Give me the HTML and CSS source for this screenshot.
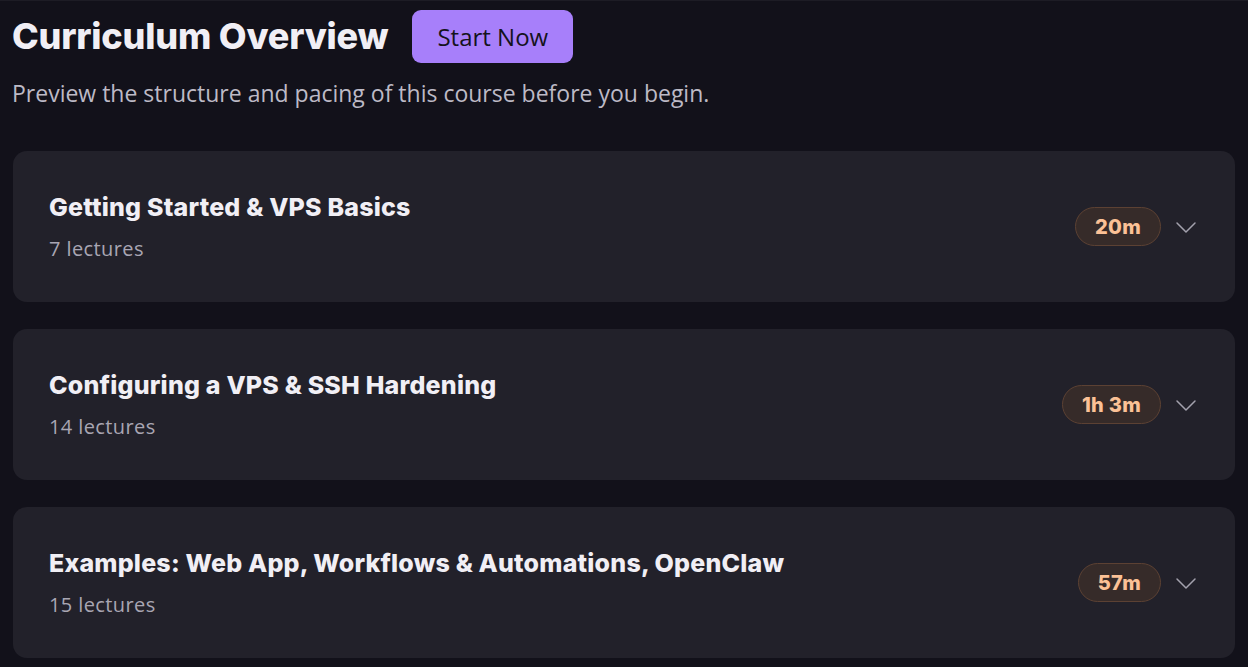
FILE: index.html
```html
<!DOCTYPE html>
<html lang="en">
<head>
<meta charset="utf-8">
<title>Curriculum Overview</title>
<link rel="stylesheet" href="styles.css">
</head>
<body>
<main class="page">
  <header class="head">
    <div class="head-row">
      <h1 class="title">Curriculum Overview</h1>
      <button class="start">Start Now</button>
    </div>
    <p class="lead">Preview the structure and pacing of this course before you begin.</p>
  </header>
  <section class="sections">
    <div class="card">
      <div class="info">
        <h2 class="card-title">Getting Started &amp; VPS Basics</h2>
        <p class="count">7 lectures</p>
      </div>
      <div class="meta">
        <span class="badge">20m</span>
        <svg class="chev" width="24" height="24" viewBox="0 0 24 24" fill="none" stroke="currentColor" stroke-width="1.5" stroke-linecap="round" stroke-linejoin="round"><path d="M3 8l9 9 9-9"/></svg>
      </div>
    </div>
    <div class="card">
      <div class="info">
        <h2 class="card-title">Configuring a VPS &amp; SSH Hardening</h2>
        <p class="count">14 lectures</p>
      </div>
      <div class="meta">
        <span class="badge">1h 3m</span>
        <svg class="chev" width="24" height="24" viewBox="0 0 24 24" fill="none" stroke="currentColor" stroke-width="1.5" stroke-linecap="round" stroke-linejoin="round"><path d="M3 8l9 9 9-9"/></svg>
      </div>
    </div>
    <div class="card">
      <div class="info">
        <h2 class="card-title">Examples: Web App, Workflows &amp; Automations, OpenClaw</h2>
        <p class="count">15 lectures</p>
      </div>
      <div class="meta">
        <span class="badge">57m</span>
        <svg class="chev" width="24" height="24" viewBox="0 0 24 24" fill="none" stroke="currentColor" stroke-width="1.5" stroke-linecap="round" stroke-linejoin="round"><path d="M3 8l9 9 9-9"/></svg>
      </div>
    </div>
  </section>
</main>
</body>
</html>
```
FILE: styles.css
```css
html, body {
  margin: 0;
  padding: 0;
  background: #12111a;
}
body {
  font-family: "Open Sans", "Noto Sans", sans-serif;
  color: #f1eff5;
  border-top: 1px solid #1d1c25;
}
.page {
  padding: 8px 13px 0 12px;
}
.head-row {
  display: flex;
  align-items: center;
  gap: 24px;
}
.title {
  margin: 0;
  font-family: "Inter", "Liberation Sans", sans-serif;
  font-weight: 800;
  font-size: 36px;
  letter-spacing: -0.2px;
  color: #f1eff5;
  line-height: 54px;
}
.start {
  height: 53px;
  padding: 0 25px;
  border: none;
  border-radius: 9px;
  background: #a77ffa;
  color: #15131c;
  font-family: "Open Sans", sans-serif;
  font-size: 24px;
  cursor: pointer;
}
.lead {
  margin: 13px 0 0;
  font-size: 23px;
  line-height: 34px;
  color: #bdbac6;
}
.sections {
  margin-top: 41px;
  display: flex;
  flex-direction: column;
  gap: 27px;
}
.card {
  height: 151px;
  box-sizing: border-box;
  margin-left: 1px;
  padding: 0 37px 0 36px;
  background: #22212a;
  border-radius: 14px;
  display: flex;
  align-items: center;
  justify-content: space-between;
}
.info {
  display: flex;
  flex-direction: column;
  gap: 12px;
  margin-top: 1px;
}
.card-title {
  margin: 0;
  font-family: "Inter", "Liberation Sans", sans-serif;
  font-weight: 800;
  font-size: 25px;
  letter-spacing: 0.2px;
  line-height: 32px;
  color: #f1eff5;
}
.count {
  margin: 0;
  font-size: 20px;
  letter-spacing: 0.4px;
  line-height: 28px;
  color: #a9a6b3;
}
.meta {
  display: flex;
  align-items: center;
  gap: 13px;
}
.badge {
  display: inline-flex;
  align-items: center;
  height: 39px;
  box-sizing: border-box;
  padding: 0 19px;
  border-radius: 20px;
  background: #362b29;
  border: 1px solid #5c4133;
  color: #fbc196;
  font-family: "Inter", "Liberation Sans", sans-serif;
  font-weight: 800;
  font-size: 20px;
  letter-spacing: 0.3px;
}
.chev {
  color: #a3a1ad;
  display: block;
}
```
